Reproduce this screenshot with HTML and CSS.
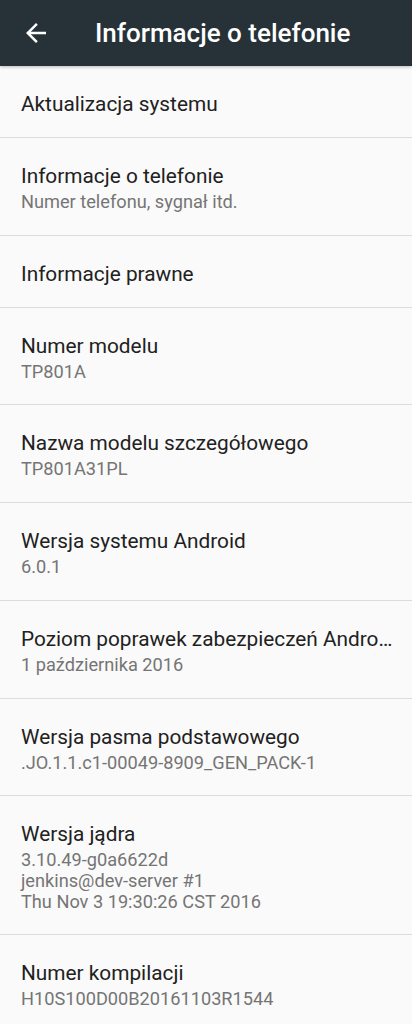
FILE: index.html
```html
<!DOCTYPE html>
<html lang="pl">
<head>
<meta charset="utf-8">
<title>Informacje o telefonie</title>
<link rel="stylesheet" href="styles.css">
</head>
<body>
<header class="appbar">
  <svg class="back" viewBox="0 0 24 24" width="30" height="30" aria-hidden="true"><path d="M20 11H7.83l5.59-5.59L12 4l-8 8 8 8 1.41-1.41L7.83 13H20v-2z" fill="#ffffff"/></svg>
  <h1 class="appbar-title">Informacje o telefonie</h1>
</header>
<ul class="list">
  <li class="item item--single"><div class="title">Aktualizacja systemu</div></li>
  <li class="item"><div class="title">Informacje o telefonie</div><div class="sub">Numer telefonu, sygnał itd.</div></li>
  <li class="item item--single"><div class="title">Informacje prawne</div></li>
  <li class="item"><div class="title">Numer modelu</div><div class="sub">TP801A</div></li>
  <li class="item"><div class="title">Nazwa modelu szczegółowego</div><div class="sub">TP801A31PL</div></li>
  <li class="item"><div class="title">Wersja systemu Android</div><div class="sub">6.0.1</div></li>
  <li class="item"><div class="title">Poziom poprawek zabezpieczeń Androida</div><div class="sub">1 października 2016</div></li>
  <li class="item"><div class="title">Wersja pasma podstawowego</div><div class="sub">.JO.1.1.c1-00049-8909_GEN_PACK-1</div></li>
  <li class="item"><div class="title">Wersja jądra</div><div class="sub">3.10.49-g0a6622d<br>jenkins@dev-server #1<br>Thu Nov 3 19:30:26 CST 2016</div></li>
  <li class="item"><div class="title">Numer kompilacji</div><div class="sub">H10S100D00B20161103R1544</div></li>
</ul>
</body>
</html>
```
FILE: styles.css
```css
* { box-sizing: border-box; }
html, body { margin: 0; padding: 0; }
body {
  background: #fafafa;
  font-family: Roboto, "Noto Sans", sans-serif;
  overflow: hidden;
}
.appbar {
  position: relative;
  z-index: 1;
  height: 66px;
  background: #263238;
  display: flex;
  align-items: center;
  box-shadow: 0 1px 3px rgba(0,0,0,0.25);
}
.back {
  margin-left: 21px;
  flex: none;
}
.appbar-title {
  margin: 0 0 0 44px;
  color: #ffffff;
  font-size: 26px;
  font-weight: 500;
  line-height: 30px;
  white-space: nowrap;
}
.list {
  list-style: none;
  margin: 0;
  padding: 0;
}
.item {
  padding: 26px 16px 22px 21px;
  border-bottom: 1px solid #dcdcdc;
}
.item--single {
  padding-bottom: 21px;
}
.title {
  font-size: 20.8px;
  line-height: 24px;
  color: #212121;
  white-space: nowrap;
  overflow: hidden;
  text-overflow: ellipsis;
}
.sub {
  margin-top: 4px;
  font-size: 18.2px;
  line-height: 20.7px;
  color: #757575;
  white-space: nowrap;
}
```
